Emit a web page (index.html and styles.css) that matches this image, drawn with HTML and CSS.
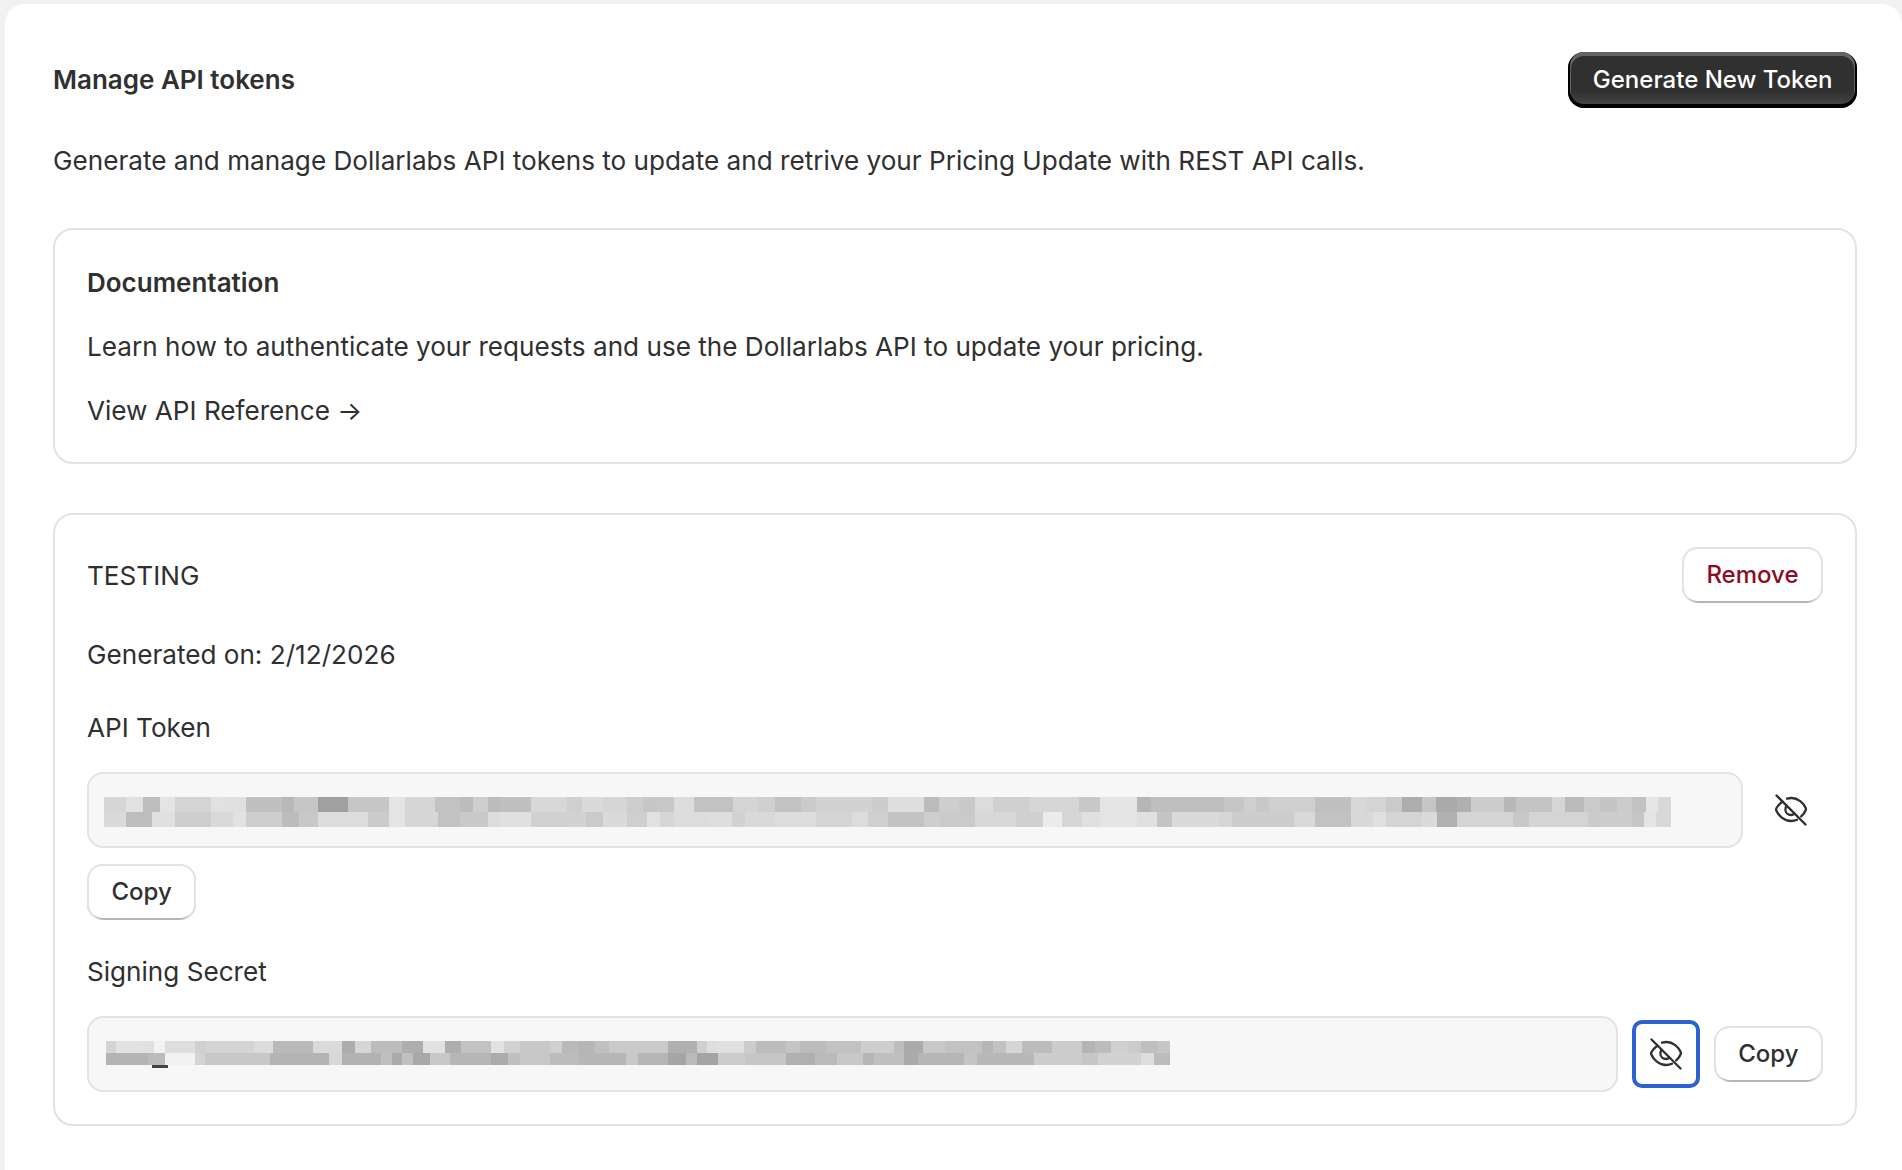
FILE: index.html
```html
<!DOCTYPE html>
<html lang="en">
<head>
  <meta charset="UTF-8" />
  <meta name="viewport" content="width=device-width, initial-scale=1.0" />
  <title>Manage API tokens</title>
  <link rel="stylesheet" href="styles.css">
</head>
<body>
  <main class="page-card">
    <div class="page-header">
      <h1>Manage API tokens</h1>
      <button type="button" class="btn btn-primary">Generate New Token</button>
    </div>
    <p class="page-intro">Generate and manage Dollarlabs API tokens to update and retrive your Pricing Update with REST API calls.</p>

    <section class="box docs-box">
      <h2>Documentation</h2>
      <p>Learn how to authenticate your requests and use the Dollarlabs API to update your pricing.</p>
      <a href="#">View API Reference →</a>
    </section>

    <section class="box token-box">
      <div class="token-header">
        <span class="token-name">TESTING</span>
        <button type="button" class="btn btn-danger">Remove</button>
      </div>
      <p class="generated">Generated on: 2/12/2026</p>

      <label class="field-label">API Token</label>
      <div class="field-row">
        <div class="masked-input">
          <div class="mask-row token-top"></div>
          <div class="mask-row token-bottom"></div>
        </div>
        <button type="button" class="icon-btn" aria-label="Hide API token">
          <svg viewBox="0 0 32 32" width="32" height="32" fill="none" stroke="#303030" stroke-width="2.3" stroke-linecap="round" stroke-linejoin="round">
            <path d="M1.5 1.5 30.5 30.5" />
            <path d="M12 4.6C13.5 4.2 15 4 16.5 4 23 4 28.5 9 30.8 14.2 31 14.8 31 15.4 30.8 16 30 18 28.4 20.4 26.2 22.4" />
            <path d="M7.5 7.5C4.8 9.5 2.6 12 1.3 14.5 1 15.2 1 15.8 1.3 16.5 3.5 21.5 9 27 16 27 18.2 27 20.2 26.6 22 25.8" />
            <path d="M11.6 11.8C10.8 12.8 10.4 14 10.4 15.5 10.4 18.6 12.9 21 16 21 17.4 21 18.6 20.5 19.6 19.7" />
          </svg>
        </button>
      </div>
      <button type="button" class="btn btn-copy">Copy</button>

      <label class="field-label">Signing Secret</label>
      <div class="field-row">
        <div class="masked-input">
          <div class="mask-row secret-top"></div>
          <div class="mask-row secret-bottom"></div>
          <div class="mask-caret"></div>
        </div>
        <button type="button" class="icon-btn icon-btn-focused" aria-label="Hide signing secret">
          <svg viewBox="0 0 32 32" width="32" height="32" fill="none" stroke="#303030" stroke-width="2.3" stroke-linecap="round" stroke-linejoin="round">
            <path d="M1.5 1.5 30.5 30.5" />
            <path d="M12 4.6C13.5 4.2 15 4 16.5 4 23 4 28.5 9 30.8 14.2 31 14.8 31 15.4 30.8 16 30 18 28.4 20.4 26.2 22.4" />
            <path d="M7.5 7.5C4.8 9.5 2.6 12 1.3 14.5 1 15.2 1 15.8 1.3 16.5 3.5 21.5 9 27 16 27 18.2 27 20.2 26.6 22 25.8" />
            <path d="M11.6 11.8C10.8 12.8 10.4 14 10.4 15.5 10.4 18.6 12.9 21 16 21 17.4 21 18.6 20.5 19.6 19.7" />
          </svg>
        </button>
        <button type="button" class="btn">Copy</button>
      </div>
    </section>
  </main>
</body>
</html>
```

FILE: styles.css
```css
* {
  box-sizing: border-box;
  margin: 0;
  padding: 0;
}
html, body {
  height: 100%;
}
body {
  background: #f1f1f1;
  color: #303030;
  font-family: 'Inter', sans-serif;
  font-size: 26.13px;
  line-height: 32px;
  padding: 4px 0 0 5px;
  overflow: hidden;
}
.page-card {
  background: #fff;
  border-radius: 20px 20px 0 0;
  min-height: 100%;
  padding: 48px 45px 0 48px;
}
.page-header {
  display: flex;
  align-items: center;
  justify-content: space-between;
}
h1, h2 {
  font-size: 26px;
  font-weight: 600;
}
.page-intro {
  margin: 37px 0 51px;
}
.box {
  border: 2px solid #e3e3e3;
  border-radius: 20px;
}
.docs-box {
  display: flex;
  flex-direction: column;
  gap: 32px;
  padding: 37px 32px 35px;
  margin-bottom: 49px;
}
.docs-box a {
  color: #303030;
  text-decoration: none;
}
.token-box {
  padding: 32px 32px 32px;
}
.token-header {
  display: flex;
  align-items: center;
  justify-content: space-between;
}
.token-name {
  padding-top: 2px;
}
.generated {
  margin: 36px 0 41px;
}
.field-label {
  display: block;
  margin-bottom: 28px;
}
.field-row {
  display: flex;
  align-items: center;
  gap: 16px;
}
.masked-input {
  flex: 1;
  height: 76px;
  background: #f7f7f7;
  border: 2px solid #e3e3e3;
  border-radius: 16px;
  padding: 23px 15px 0;
}
.mask-row {
  height: 15px;
}
.token-top {
  width: 1567px;
  background: linear-gradient(90deg, #d6d6d6 0 22px, #e2e2e2 0 39px, #bdbdbd 0 56px, #e4e4e4 0 71px, #d4d4d4 0 107px, #e1e1e1 0 123px, #e0e0e0 0 142px, #c0c0c0 0 178px, #b8b8b8 0 190px, #c6c6c6 0 214px, #a0a0a0 0 244px, #c6c6c6 0 285px, #e4e4e4 0 301px, #d6d6d6 0 331px, #c2c2c2 0 356px, #bcbcbc 0 369px, #cecece 0 384px, #bcbcbc 0 396px, #c0c0c0 0 427px, #d8d8d8 0 463px, #cfcfcf 0 478px, #dadada 0 499px, #d6d6d6 0 523px, #cecece 0 539px, #c6c6c6 0 553px, #c8c8c8 0 570px, #dcdcdc 0 590px, #c2c2c2 0 629px, #d4d4d4 0 654px, #cfcfcf 0 671px, #c2c2c2 0 697px, #cbcbcb 0 712px, #d2d2d2 0 768px, #cdcdcd 0 784px, #dedede 0 820px, #bcbcbc 0 835px, #cecece 0 855px, #c9c9c9 0 871px, #dcdcdc 0 889px, #d0d0d0 0 926px, #d6d6d6 0 975px, #c8c8c8 0 996px, #e4e4e4 0 1033px, #b6b6b6 0 1047px, #bfbfbf 0 1120px, #c6c6c6 0 1140px, #cfcfcf 0 1152px, #c8c8c8 0 1165px, #cfcfcf 0 1211px, #c0c0c0 0 1247px, #d8d8d8 0 1262px, #d4d4d4 0 1282px, #cacaca 0 1298px, #adadad 0 1318px, #c6c6c6 0 1332px, #aaaaaa 0 1353px, #b0b0b0 0 1367px, #cdcdcd 0 1400px, #b8b8b8 0 1412px, #c4c4c4 0 1448px, #d6d6d6 0 1461px, #bababa 0 1480px, #cacaca 0 1496px, #c5c5c5 0 1513px, #cccccc 0 1528px, #c2c2c2 0 1542px, #e6e6e6 0 1554px, #d8d8d8 0 1567px);
}
.token-bottom {
  width: 1567px;
  background: linear-gradient(90deg, #dadada 0 22px, #bdbdbd 0 48px, #e0e0e0 0 71px, #cecece 0 107px, #d9d9d9 0 129px, #e2e2e2 0 142px, #cecece 0 178px, #bcbcbc 0 195px, #c8c8c8 0 214px, #dddddd 0 264px, #cbcbcb 0 285px, #e4e4e4 0 301px, #d6d6d6 0 334px, #c2c2c2 0 356px, #c9c9c9 0 384px, #dcdcdc 0 396px, #e0e0e0 0 427px, #d1d1d1 0 463px, #d2d2d2 0 482px, #cacaca 0 499px, #dadada 0 523px, #cfcfcf 0 543px, #e1e1e1 0 556px, #d6d6d6 0 570px, #dcdcdc 0 605px, #dedede 0 628px, #d2d2d2 0 641px, #d9d9d9 0 671px, #dddddd 0 712px, #d4d4d4 0 748px, #dcdcdc 0 764px, #cfcfcf 0 784px, #c3c3c3 0 820px, #cecece 0 836px, #cacaca 0 871px, #d8d8d8 0 912px, #d0d0d0 0 939px, #ececec 0 958px, #d6d6d6 0 978px, #e0e0e0 0 996px, #e4e4e4 0 1033px, #e0e0e0 0 1053px, #c4c4c4 0 1068px, #dadada 0 1115px, #d6d6d6 0 1128px, #cdcdcd 0 1190px, #d9d9d9 0 1211px, #c2c2c2 0 1247px, #d8d8d8 0 1269px, #e0e0e0 0 1282px, #d4d4d4 0 1318px, #dadada 0 1333px, #b0b0b0 0 1353px, #d4d4d4 0 1409px, #c8c8c8 0 1425px, #d4d4d4 0 1484px, #cbcbcb 0 1496px, #cdcdcd 0 1528px, #c6c6c6 0 1540px, #e4e4e4 0 1552px, #d8d8d8 0 1567px);
}
.secret-top, .secret-bottom {
  width: 1064px;
  height: 12px;
  margin-left: 2px;
}
.secret-top {
  background: linear-gradient(90deg, #d4d4d4 0 10px, #e2e2e2 0 37px, #e0e0e0 0 48px, #f2f2f2 0 59px, #dedede 0 89px, #d0d0d0 0 100px, #d4d4d4 0 148px, #dcdcdc 0 167px, #b9b9b9 0 207px, #dadada 0 236px, #adadad 0 249px, #d6d6d6 0 265px, #bcbcbc 0 296px, #aeaeae 0 317px, #e2e2e2 0 339px, #aeaeae 0 355px, #c2c2c2 0 385px, #e2e2e2 0 398px, #d2d2d2 0 414px, #c8c8c8 0 444px, #d0d0d0 0 456px, #bababa 0 473px, #b6b6b6 0 489px, #c0c0c0 0 503px, #cacaca 0 562px, #b0b0b0 0 591px, #cfcfcf 0 601px, #dedede 0 612px, #e0e0e0 0 638px, #cccccc 0 650px, #bcbcbc 0 680px, #c4c4c4 0 694px, #bcbcbc 0 720px, #c2c2c2 0 755px, #cecece 0 788px, #bdbdbd 0 798px, #ababab 0 817px, #c8c8c8 0 839px, #c2c2c2 0 876px, #b6b6b6 0 887px, #c2c2c2 0 900px, #d6d6d6 0 916px, #bcbcbc 0 946px, #cccccc 0 976px, #b4b4b4 0 989px, #bcbcbc 0 1005px, #d0d0d0 0 1022px, #cbcbcb 0 1035px, #bfbfbf 0 1052px, #c6c6c6 0 1064px);
}
.secret-bottom {
  background: linear-gradient(90deg, #b4b4b4 0 42px, #bcbcbc 0 59px, #f2f2f2 0 89px, #d4d4d4 0 99px, #c8c8c8 0 164px, #b4b4b4 0 223px, #d8d8d8 0 236px, #b2b2b2 0 275px, #c0c0c0 0 286px, #aaaaaa 0 296px, #c0c0c0 0 307px, #a8a8a8 0 324px, #c8c8c8 0 344px, #b6b6b6 0 385px, #acacac 0 402px, #c0c0c0 0 414px, #c8c8c8 0 444px, #bcbcbc 0 473px, #b6b6b6 0 520px, #c8c8c8 0 532px, #b6b6b6 0 562px, #a6a6a6 0 580px, #bababa 0 591px, #a4a4a4 0 612px, #cccccc 0 639px, #c6c6c6 0 680px, #b0b0b0 0 709px, #bababa 0 731px, #c8c8c8 0 757px, #b6b6b6 0 768px, #c0c0c0 0 798px, #aaaaaa 0 812px, #b6b6b6 0 858px, #c4c4c4 0 871px, #b8b8b8 0 928px, #cdcdcd 0 976px, #c6c6c6 0 992px, #d2d2d2 0 1035px, #dedede 0 1048px, #bcbcbc 0 1064px);
}
.mask-caret {
  width: 16px;
  height: 3px;
  margin-left: 48px;
  background: #444;
}
.btn {
  flex: none;
  height: 56px;
  padding: 0 24.5px;
  border: none;
  border-radius: 16px;
  background: #fff;
  color: #303030;
  font: 500 24px/32px 'Inter', sans-serif;
  cursor: pointer;
  box-shadow: inset 0 2px 0 #e3e3e3, inset 2px 0 0 #e3e3e3, inset -2px 0 0 #e3e3e3, inset 0 -2px 0 #b5b5b5;
}
.btn-primary {
  background: linear-gradient(#303030 70%, #4a4a4a);
  color: #fff;
  box-shadow: inset 0 -2px 0 2px #000, inset 0 1px 0 3px rgba(255, 255, 255, 0.25);
}
.btn-danger {
  color: #8e0b21;
}
.btn-copy {
  display: block;
  margin: 16px 0 36px;
}
.icon-btn {
  flex: none;
  width: 64px;
  height: 64px;
  display: flex;
  align-items: center;
  justify-content: center;
  border: none;
  border-radius: 8px;
  background: #fff;
  cursor: pointer;
}
.icon-btn-focused {
  outline: 4px solid #2c62cf;
  outline-offset: -2px;
}
```
